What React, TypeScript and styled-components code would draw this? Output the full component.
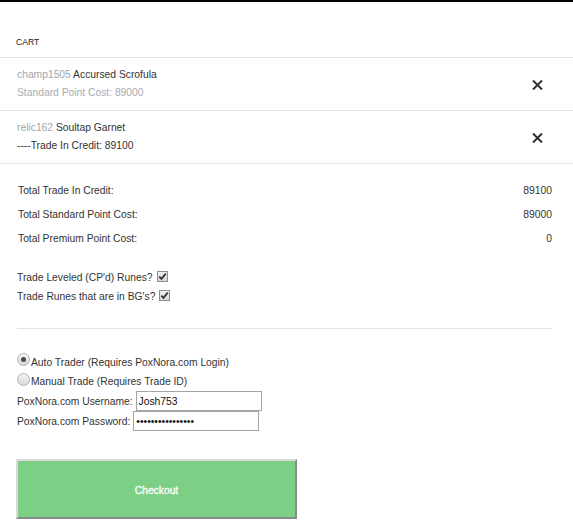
import React from "react";
import styled, { createGlobalStyle } from "styled-components";

const Global = createGlobalStyle`
  html, body { margin: 0; padding: 0; background: #fff; }
  body { font-family: "Liberation Sans", Arial, sans-serif; color: #333; }
`;

const Page = styled.div`
  border-top: 2px solid #000;
  width: 573px;
  font-size: 10.3px;
`;

const Header = styled.div`
  padding: 34px 16px 9px 16px;
  line-height: 12px;
  font-size: 8.6px;
  color: #222;
  border-bottom: 1px solid #dfe5ec;
`;

const ItemRow = styled.div`
  display: flex;
  align-items: center;
  justify-content: space-between;
  padding: 8px 30px 8px 17px;
  border-bottom: 1px solid #dfe5ec;
`;

const ItemInfo = styled.div`
  display: flex;
  flex-direction: column;
`;

const Line = styled.div<{ $muted?: boolean }>`
  line-height: 18px;
  color: ${(p) => (p.$muted ? "#a7abb0" : "#333")};
`;

const Owner = styled.span`
  color: #a3a6aa;
`;

const RemoveButton = styled.button`
  display: flex;
  align-items: center;
  justify-content: center;
  width: 12px;
  height: 12px;
  padding: 0;
  border: none;
  background: none;
  cursor: pointer;
  margin-top: 1px;
`;

const Body = styled.div`
  padding: 14px 21px 0 18px;
`;

const TotalRow = styled.div`
  display: flex;
  justify-content: space-between;
  align-items: center;
  height: 24px;
`;

const Options = styled.div`
  margin-top: 18px;
  margin-left: -1px;
`;

const OptionRow = styled.label`
  display: flex;
  align-items: center;
  height: 19px;
  gap: 4px;
`;

const Check = styled.span`
  display: inline-flex;
  width: 11px;
  height: 11px;
  margin-top: -3px;
`;

const Divider = styled.hr`
  border: none;
  border-top: 1px solid #e3e3e3;
  margin: 22px 0 0 -1px;
  height: 0;
`;

const TradeSection = styled.div`
  margin-top: 23px;
  margin-left: -1px;
`;

const RadioRow = styled.label<{ $h: number }>`
  display: flex;
  align-items: center;
  height: ${(p) => p.$h}px;
`;

const Radio = styled.span<{ $on?: boolean }>`
  position: relative;
  width: 11px;
  height: 11px;
  border-radius: 50%;
  border: 1px solid #b3b3b3;
  background: linear-gradient(#f4f4f4, #d9d9d9);
  margin-top: -5px;
  margin-right: 1px;
  flex: none;
  &::after {
    content: "";
    display: ${(p) => (p.$on ? "block" : "none")};
    position: absolute;
    left: 3px;
    top: 3px;
    width: 5px;
    height: 5px;
    border-radius: 50%;
    background: #4a4a4a;
  }
`;

const FieldRow = styled.div`
  display: flex;
  align-items: center;
  height: 20px;
  gap: 3px;
`;

const TextInput = styled.input`
  box-sizing: border-box;
  width: 126px;
  height: 20px;
  border: 1px solid #a5a5a5;
  padding: 0 2px;
  font-family: "Liberation Sans", Arial, sans-serif;
  font-size: 10.3px;
  color: #111;
  outline: none;
`;

const CheckoutButton = styled.button`
  margin-top: 28px;
  box-sizing: border-box;
  width: 281px;
  height: 60px;
  padding-top: 3px;
  background: #7ecf86;
  border-style: solid;
  border-width: 2px;
  border-color: #dadada #8a8a8a #8a8a8a #dadada;
  color: #fff;
  font-family: "Liberation Sans", Arial, sans-serif;
  font-size: 10.3px;
  -webkit-text-stroke: 0.3px #fff;
  margin-left: -1px;
  cursor: pointer;
`;

const CloseIcon = () => (
  <svg width="11" height="10" viewBox="0 0 11 10">
    <path d="M1 0.5 L10 9.5 M10 0.5 L1 9.5" stroke="#2c2f33" strokeWidth="2" fill="none" />
  </svg>
);

const CheckIcon = () => (
  <svg width="11" height="11" viewBox="0 0 11 11">
    <defs>
      <linearGradient id="cbg" x1="0" y1="0" x2="0" y2="1">
        <stop offset="0" stopColor="#f0f0f0" />
        <stop offset="1" stopColor="#d6d6d6" />
      </linearGradient>
    </defs>
    <rect x="0.5" y="0.5" width="10" height="10" fill="url(#cbg)" stroke="#8e8e8e" />
    <path d="M2.3 5.6 L4.4 7.8 L8.8 2.6" stroke="#333" strokeWidth="1.8" fill="none" />
  </svg>
);

const items = [
  { owner: "champ1505", name: "Accursed Scrofula", detail: "Standard Point Cost: 89000", muted: true },
  { owner: "relic162", name: "Soultap Garnet", detail: "----Trade In Credit: 89100", muted: false },
];

const totals = [
  ["Total Trade In Credit:", "89100"],
  ["Total Standard Point Cost:", "89000"],
  ["Total Premium Point Cost:", "0"],
];

export default function App() {
  return (
    <Page>
      <Global />
      <Header>CART</Header>
      {items.map((it) => (
        <ItemRow key={it.owner}>
          <ItemInfo>
            <Line>
              <Owner>{it.owner}</Owner> {it.name}
            </Line>
            <Line $muted={it.muted}>{it.detail}</Line>
          </ItemInfo>
          <RemoveButton aria-label="Remove">
            <CloseIcon />
          </RemoveButton>
        </ItemRow>
      ))}
      <Body>
        {totals.map(([label, value]) => (
          <TotalRow key={label}>
            <span>{label}</span>
            <span>{value}</span>
          </TotalRow>
        ))}
        <Options>
          <OptionRow>
            Trade Leveled (CP'd) Runes?
            <Check>
              <CheckIcon />
            </Check>
          </OptionRow>
          <OptionRow>
            Trade Runes that are in BG's?
            <Check>
              <CheckIcon />
            </Check>
          </OptionRow>
        </Options>
        <Divider />
        <TradeSection>
          <RadioRow $h={20}>
            <Radio $on />
            Auto Trader (Requires PoxNora.com Login)
          </RadioRow>
          <RadioRow $h={19}>
            <Radio />
            Manual Trade (Requires Trade ID)
          </RadioRow>
          <FieldRow>
            <span>PoxNora.com Username:</span>
            <TextInput type="text" defaultValue="Josh753" />
          </FieldRow>
          <FieldRow>
            <span>PoxNora.com Password:</span>
            <TextInput type="password" defaultValue="1234567890123456" />
          </FieldRow>
          <CheckoutButton>Checkout</CheckoutButton>
        </TradeSection>
      </Body>
    </Page>
  );
}
